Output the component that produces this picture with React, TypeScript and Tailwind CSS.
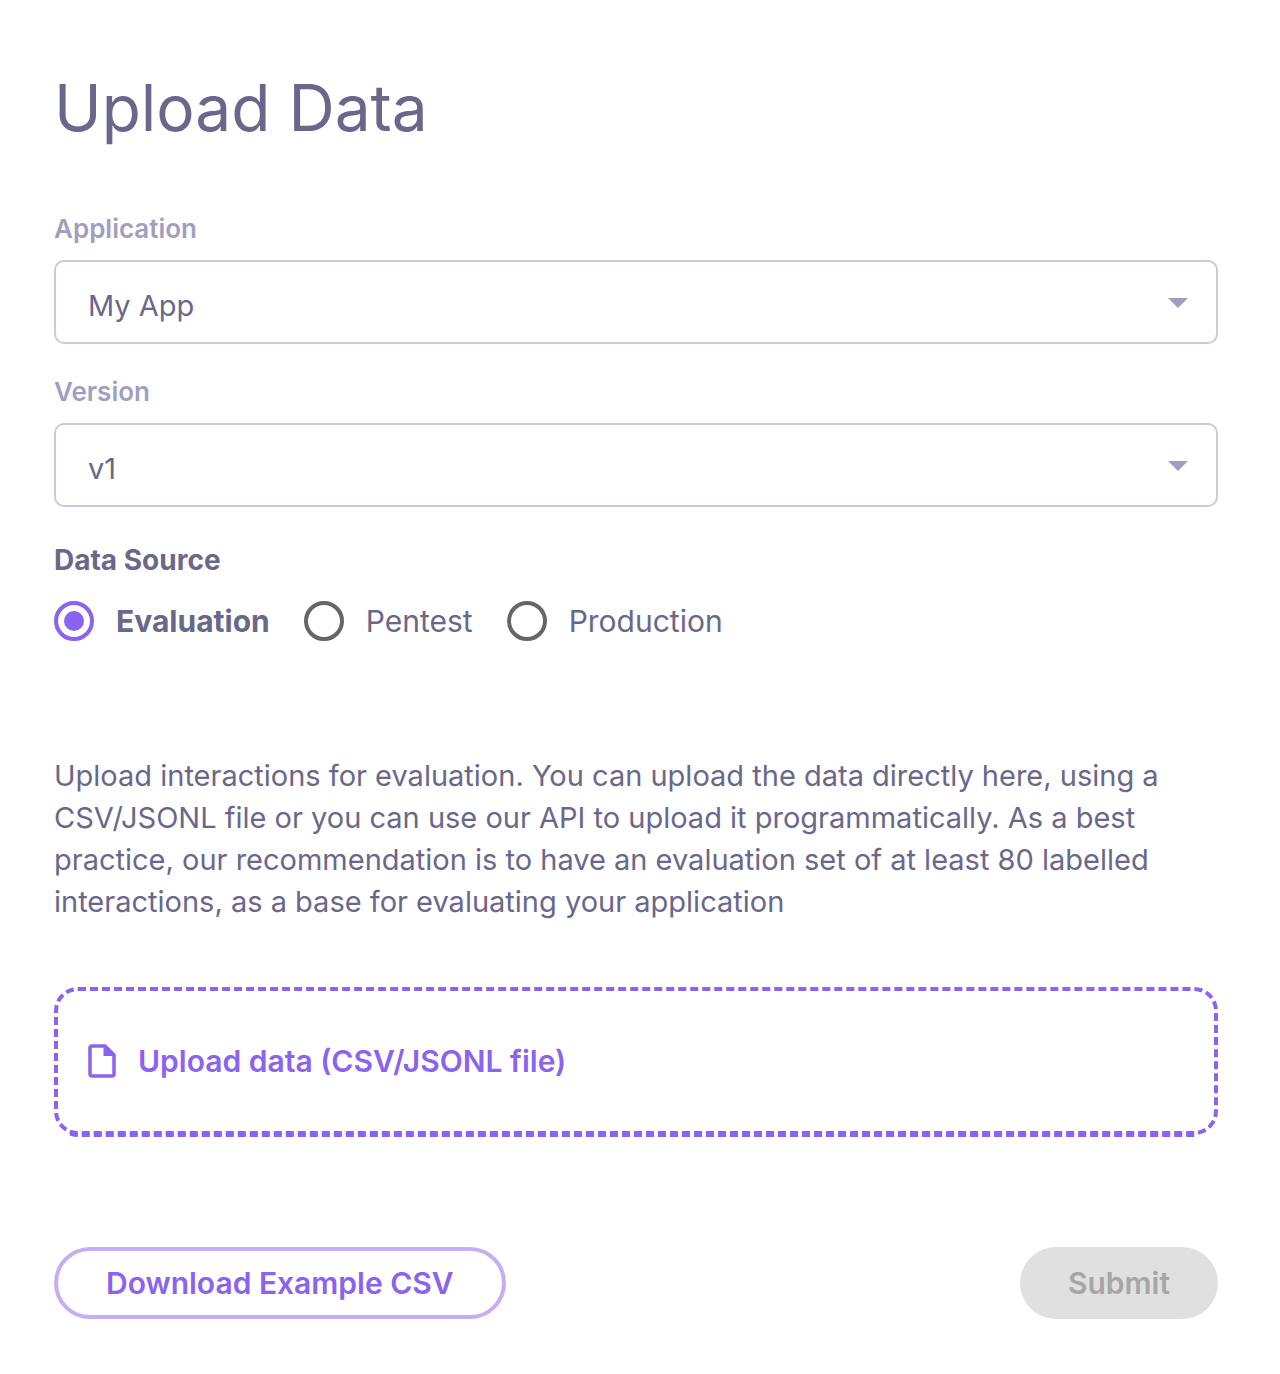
import { useState } from "react";

const sources = ["Evaluation", "Pentest", "Production"];

function SelectField({ id, label, value }: { id: string; label: string; value: string }) {
  return (
    <div className="flex flex-col">
      <label htmlFor={id} className="text-[26px] leading-8 font-semibold text-[#a09fbf]">{label}</label>
      <div className="relative mt-[15px]">
        <select id={id} defaultValue={value} className="h-[84px] w-full appearance-none rounded-[10px] border-2 border-[#c9c9df] bg-white pt-2 pr-16 pl-8 text-[29px] text-[#69688c]">
          <option>{value}</option>
        </select>
        <svg className="pointer-events-none absolute top-[38px] right-[30px]" width="20" height="10" viewBox="0 0 20 10" aria-hidden="true">
          <path d="M0 0h20L10 10z" fill="#9f9ebe" />
        </svg>
      </div>
    </div>
  );
}

export default function App() {
  const [source, setSource] = useState("Evaluation");
  return (
    <main className="flex min-h-screen flex-col bg-white pt-[60px] pr-[62px] pb-14 pl-[54px] font-['Inter',sans-serif] text-[#69688c]">
      <h1 className="text-[64px] leading-[96px]">Upload Data</h1>
      <div className="mt-[57px] flex flex-col gap-8">
        <SelectField id="application" label="Application" value="My App" />
        <SelectField id="version" label="Version" value="v1" />
      </div>
      <fieldset className="mt-[35px]">
        <legend className="text-[28px] leading-9 font-bold">Data Source</legend>
        <div className="mt-[23px] flex flex-wrap gap-x-[34px] gap-y-4">
          {sources.map((name) => (
            <label key={name} className="flex items-center gap-[22px] text-[30px] leading-10 has-checked:font-bold">
              <input type="radio" name="source" checked={source === name} onChange={() => setSource(name)} className="grid size-10 appearance-none place-items-center rounded-full border-4 border-[#666] before:size-5 before:rounded-full checked:border-[#8a63f0] checked:before:bg-[#8a63f0]" />
              {name}
            </label>
          ))}
        </div>
      </fieldset>
      <p className="mt-[114px] text-[29px] leading-[42px]">
        Upload interactions for evaluation. You can upload the data directly here, using a CSV/JSONL file or you can use our API to upload it programmatically. As a best practice, our recommendation is to have an evaluation set of at least 80 labelled interactions, as a base for evaluating your application
      </p>
      <button type="button" className="relative mt-16 flex h-[148px] items-center gap-[22px] rounded-3xl border-4 border-dashed border-[#8a63f0] px-[30px] text-[30px] font-semibold text-[#8a63f0] after:absolute after:-inset-x-1 after:-top-0.5 after:-bottom-1.5 after:rounded-3xl after:border-4 after:border-dashed after:border-[#8a63f0] after:[clip-path:inset(142px_20px_0_16px)]">
        <svg width="28" height="34" viewBox="0 0 28 34" fill="none" aria-hidden="true">
          <path d="M4 2h13l9 9v19a2 2 0 0 1-2 2H4a2 2 0 0 1-2-2V4a2 2 0 0 1 2-2z" stroke="currentColor" strokeWidth="3.5" />
          <path d="M15.5 1v11H27z" fill="currentColor" />
        </svg>
        Upload data (CSV/JSONL file)
      </button>
      <div className="mt-28 flex flex-wrap justify-between gap-4">
        <button type="button" className="h-[72px] rounded-full border-4 border-[#c4aff7] px-12 text-[30px] font-semibold text-[#8a63f0]">Download Example CSV</button>
        <button type="button" disabled className="h-[72px] rounded-full bg-[#e0e0e0] px-12 text-[30px] font-semibold text-[#a6a6a6]">Submit</button>
      </div>
    </main>
  );
}
